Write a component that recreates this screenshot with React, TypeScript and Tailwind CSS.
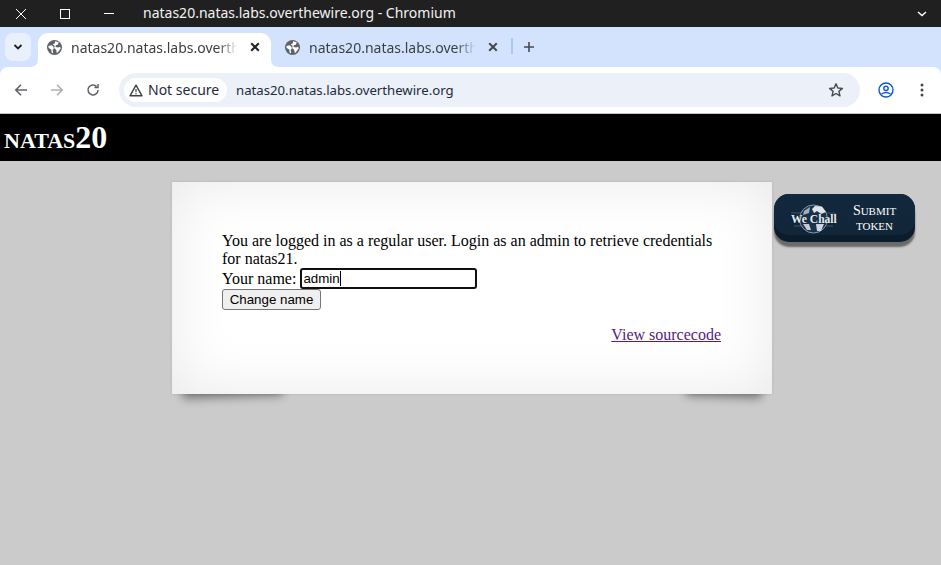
import React from "react";

const Globe = ({ c = "#5f6368" }: { c?: string }) => (
  <svg width="15" height="15" viewBox="0 0 16 16" className="shrink-0">
    <circle cx="8" cy="8" r="8" fill={c} />
    <path d="M1.5 6.5 L5 5.5 L7 7.5 L7.2 9.5 L6 10 L6.5 14 L5 13.5 L4.5 10 L1.8 8.5Z M8.5 1.2 L12.5 2.5 L11.5 5 L9.5 5.5 L9 7.5 L12 8 L14 7.2 L14.6 9 L12 12.5 L10.5 14 L9.8 10.5 L7.8 8.8 L8 6 L6.2 4.5 L8.5 3.5Z" fill="#ffffff" />
  </svg>
);

const X = ({ c, w = 2 }: { c: string; w?: number }) => (
  <svg width="10" height="10" viewBox="0 0 10 10">
    <path d="M1.2 1.2 L8.8 8.8 M8.8 1.2 L1.2 8.8" stroke={c} strokeWidth={w} fill="none" />
  </svg>
);

const Tab = ({ active }: { active?: boolean }) => (
  <div className={active ? "relative flex h-[34px] w-[233px] items-center rounded-t-[10px] bg-white pb-[6px] pl-[9px]" : "flex h-[34px] w-[241px] items-center pb-[6px] pl-[14px]"}>
    {active && (
      <>
        <svg width="8" height="8" viewBox="0 0 8 8" className="absolute bottom-0 left-[-8px]"><path d="M8 0 V8 H0 Q8 8 8 0Z" fill="#ffffff" /></svg>
        <svg width="8" height="8" viewBox="0 0 8 8" className="absolute bottom-0 right-[-8px]"><path d="M0 0 V8 H8 Q0 8 0 0Z" fill="#ffffff" /></svg>
      </>
    )}
    <Globe />
    <span className="ml-[9px] w-[167px] overflow-hidden whitespace-nowrap text-[14px] text-[#3c4043] [mask-image:linear-gradient(to_right,#000_88%,transparent)]">
      natas20.natas.labs.overthewire.org
    </span>
    <span className="ml-[12px] flex">
      <X c={active ? "#202124" : "#45494e"} />
    </span>
  </div>
);

const Badge = () => (
  <div className="relative h-[48px] w-[141px] rounded-[15px] bg-[#0b1c2c] shadow-[0_5px_2px_#6a6a6a]">
    <div className="flex h-[41px] items-start rounded-[15px] bg-[linear-gradient(180deg,#12283d,#122639)] pl-[17px] pt-[9px]">
      <div className="relative h-[32px] w-[45px]">
        <svg width="45" height="34" viewBox="0 0 45 34" className="absolute left-0 top-[-1px]">
          <path d="M0 11 H45 M3 24 H42" stroke="#3f556b" strokeWidth="1" />
          <circle cx="22.5" cy="17" r="14" fill="#1b344d" stroke="#8798a8" strokeWidth="1" />
          <path d="M24 4 L31 4.5 L35 10 L30 12 L26 9 L23 11 L21 7Z" fill="#dfe4e9" />
          <path d="M13 9 L19 5 L18 11 L12 13Z" fill="#9fb0bf" />
          <path d="M12 22 L18 22 L20 28 L16 28Z" fill="#c3ccd5" />
          <path d="M25 22 L33 22 L30 29 L26 29Z" fill="#cfd6dd" />
        </svg>
        <span className="absolute left-0 top-[9px] whitespace-nowrap font-['Liberation_Serif',serif] text-[11.5px] font-bold leading-[14px] text-[#e8ecf0] [text-shadow:0_0_2px_#0b1c2c]">We Chall</span>
      </div>
      <div className="ml-[16px] flex w-[45px] flex-col items-center font-['Liberation_Serif',serif] text-white">
        <span className="whitespace-nowrap text-[11px] leading-[15px]"><span className="text-[14px]">S</span>UBMIT</span>
        <span className="whitespace-nowrap text-[11px] leading-[15px]">TOKEN</span>
      </div>
    </div>
  </div>
);

export default function App() {
  return (
    <div className="flex h-[565px] w-[941px] flex-col overflow-hidden bg-[#cbcbcb] font-['Liberation_Serif',serif]">
      {/* window title bar */}
      <div className="flex h-[27px] shrink-0 items-center bg-[#202020] pl-[15px] pr-[14px] font-['Noto_Sans',sans-serif] text-white">
        <svg width="12" height="12" viewBox="0 0 12 12"><path d="M1 1 L11 11 M11 1 L1 11" stroke="#fff" strokeWidth="1" fill="none" /></svg>
        <span className="ml-[33px] h-[10px] w-[10px] border border-white" />
        <span className="ml-[34px] h-px w-[10px] bg-white" />
        <span className="ml-[29px] whitespace-nowrap pb-[2px] text-[14px] leading-[25px] text-[#f2f2f2]">natas20.natas.labs.overthewire.org - Chromium</span>
        <svg width="10" height="6" viewBox="0 0 10 6" className="ml-auto"><path d="M1 1 L5 4.5 L9 1" stroke="#fff" strokeWidth="1.4" fill="none" /></svg>
      </div>

      {/* tab strip */}
      <div className="flex h-[40px] shrink-0 items-end bg-[#d3e3fd] pl-[5px] font-['Noto_Sans',sans-serif]">
        <div className="mb-[6px] flex h-[28px] w-[26px] items-center justify-center rounded-[8px] bg-[#e9f0fc]">
          <svg width="10" height="6" viewBox="0 0 10 6"><path d="M1.5 1 L5 4.5 L8.5 1" stroke="#202124" strokeWidth="1.8" fill="none" /></svg>
        </div>
        <div className="ml-[7px]"><Tab active /></div>
        <Tab />
        <span className="mb-[13px] ml-[-1px] h-[16px] w-[2px] shrink-0 bg-[#a8c7fa]" />
        <svg width="12" height="12" viewBox="0 0 12 12" className="mb-[14px] ml-[10px]"><path d="M6 1 V11 M1 6 H11" stroke="#45494e" strokeWidth="1.6" fill="none" /></svg>
      </div>

      {/* toolbar */}
      <div className="flex h-[47px] shrink-0 items-center border-b border-[#c4c7c5] bg-[#d3e3fd] font-['Noto_Sans',sans-serif]">
        <div className="flex h-full w-full items-center rounded-t-[8px] bg-white pl-[14px] pr-[14px]">
          <svg width="14" height="14" viewBox="0 0 14 14"><path d="M13 7 H2 M7 1.8 L1.8 7 L7 12.2" stroke="#5f6368" strokeWidth="1.6" fill="none" /></svg>
          <svg width="14" height="14" viewBox="0 0 14 14" className="ml-[22px]"><path d="M1 7 H12 M7 1.8 L12.2 7 L7 12.2" stroke="#aeb1b5" strokeWidth="1.6" fill="none" /></svg>
          <svg width="14" height="14" viewBox="0 0 14 14" className="ml-[22px]"><path d="M12 7 A5 5 0 1 1 10.5 3.4 M12 1 V4.6 H8.4" stroke="#5f6368" strokeWidth="1.5" fill="none" /></svg>
          <div className="ml-[19px] flex h-[34px] w-[741px] items-center rounded-[17px] bg-[#ebf0f9] pl-[5px]">
            <div className="flex h-[24px] w-[103px] items-center rounded-[12px] bg-white pl-[5px]">
              <svg width="14" height="13" viewBox="0 0 14 13"><path d="M7 1.2 L13 11.8 H1Z" stroke="#3c4043" strokeWidth="1.4" fill="none" strokeLinejoin="round" /><path d="M7 5 V8.2 M7 9.2 V10.4" stroke="#3c4043" strokeWidth="1.2" /></svg>
              <span className="ml-[5px] whitespace-nowrap text-[14px] leading-[20px] text-[#1f2a3a]">Not secure</span>
            </div>
            <span className="ml-[9px] whitespace-nowrap text-[13.2px] leading-[20px] text-[#1f2a3a]">natas20.natas.labs.overthewire.org</span>
            <svg width="16" height="16" viewBox="0 0 16 16" className="ml-auto mr-[16px]"><path d="M8 1.8 L9.8 6 L14.4 6.4 L10.9 9.4 L12 13.9 L8 11.5 L4 13.9 L5.1 9.4 L1.6 6.4 L6.2 6Z" stroke="#45494e" strokeWidth="1.4" fill="none" strokeLinejoin="round" /></svg>
          </div>
          <svg width="16" height="16" viewBox="0 0 16 16" className="ml-[18px]">
            <circle cx="8" cy="8" r="7" stroke="#0b57d0" strokeWidth="1.4" fill="none" />
            <circle cx="8" cy="6.3" r="2.2" stroke="#0b57d0" strokeWidth="1.4" fill="none" />
            <path d="M3.5 12 Q8 9 12.5 12" stroke="#0b57d0" strokeWidth="1.4" fill="none" />
          </svg>
          <svg width="4" height="14" viewBox="0 0 4 14" className="ml-[26px]"><circle cx="2" cy="2" r="1.5" fill="#45494e" /><circle cx="2" cy="7" r="1.5" fill="#45494e" /><circle cx="2" cy="12" r="1.5" fill="#45494e" /></svg>
        </div>
      </div>

      {/* natas header */}
      <div className="flex h-[47px] shrink-0 items-center bg-black pl-[4px] pb-[2px] text-[32px] font-bold leading-none text-white">
        <span className="[font-variant:small-caps]">natas20</span>
      </div>

      {/* page body */}
      <div className="flex items-start pt-[21px]">
        <div className="relative ml-[172px] w-[600px]">
          <div className="absolute bottom-[12px] left-[10px] h-[20px] w-[100px] rotate-[-2deg] shadow-[0_15px_10px_rgba(0,0,0,0.42)]" />
          <div className="absolute bottom-[12px] right-[10px] h-[20px] w-[75px] rotate-[2deg] shadow-[0_15px_10px_rgba(0,0,0,0.42)]" />
          <div className="relative h-[212px] bg-white pl-[50px] pr-[51px] pt-[50px] text-[16px] leading-[18px] text-black shadow-[inset_0_0_60px_rgba(0,0,0,0.09),0_0_3px_rgba(0,0,0,0.12)]">
            <div>You are logged in as a regular user. Login as an admin to retrieve credentials for natas21.</div>
            <div className="flex h-[21px] items-center">
              <span>Your name:</span>
              <div className="ml-[4px] flex h-[21px] w-[177px] items-center rounded-[3px] border-2 border-[#101010] bg-white pl-[1px] font-['Liberation_Sans',sans-serif] text-[13.33px]">
                <span>admin</span>
                <span className="h-[15px] w-px bg-black" />
              </div>
            </div>
            <button className="h-[21px] w-[99px] rounded-[3px] border border-[#767676] bg-[#efefef] font-['Liberation_Sans',sans-serif] text-[13.33px] leading-none text-black">Change name</button>
            <div className="mt-[16px] text-right">
              <a href="#" className="text-[#551a8b] underline">View sourcecode</a>
            </div>
          </div>
        </div>
        <div className="ml-[2px] mt-[12px]"><Badge /></div>
      </div>
    </div>
  );
}
